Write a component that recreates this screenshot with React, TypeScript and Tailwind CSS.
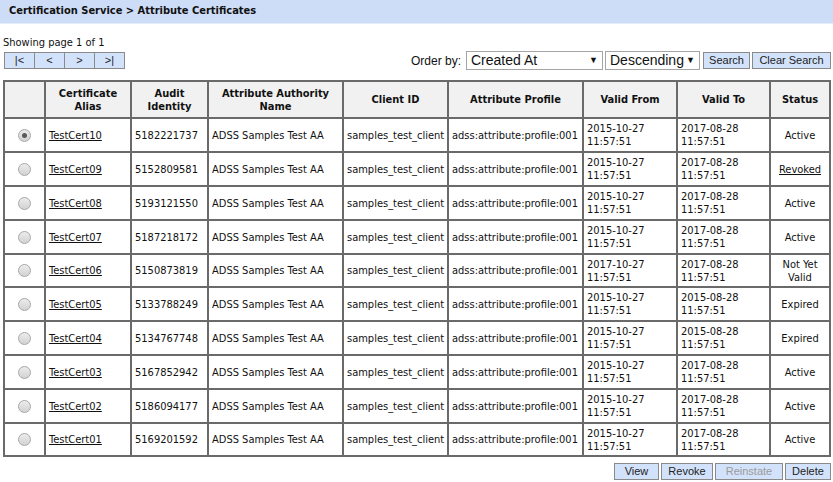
import { FC } from 'react';

type Cert = {
    alias: string;
    audit: string;
    from: string;
    to: string;
    status: string;
};

const certs: Cert[] = [
    { alias: 'TestCert10', audit: '5182221737', from: '2015-10-27', to: '2017-08-28', status: 'Active' },
    { alias: 'TestCert09', audit: '5152809581', from: '2015-10-27', to: '2017-08-28', status: 'Revoked' },
    { alias: 'TestCert08', audit: '5193121550', from: '2015-10-27', to: '2017-08-28', status: 'Active' },
    { alias: 'TestCert07', audit: '5187218172', from: '2015-10-27', to: '2017-08-28', status: 'Active' },
    { alias: 'TestCert06', audit: '5150873819', from: '2017-10-27', to: '2017-08-28', status: 'Not Yet Valid' },
    { alias: 'TestCert05', audit: '5133788249', from: '2015-10-27', to: '2015-08-28', status: 'Expired' },
    { alias: 'TestCert04', audit: '5134767748', from: '2015-10-27', to: '2015-08-28', status: 'Expired' },
    { alias: 'TestCert03', audit: '5167852942', from: '2015-10-27', to: '2017-08-28', status: 'Active' },
    { alias: 'TestCert02', audit: '5186094177', from: '2015-10-27', to: '2017-08-28', status: 'Active' },
    { alias: 'TestCert01', audit: '5169201592', from: '2015-10-27', to: '2017-08-28', status: 'Active' },
];

const btn = 'h-[17px] border border-[#8a8a8a] bg-[#d3e2fb] text-[11px] leading-none font-["Liberation_Sans",Arial,sans-serif]';
const th = 'border-2 border-[#6a6a6a] bg-[#f1f1f1] font-bold text-center align-middle leading-[13px] px-1';
const td = 'border-2 border-[#6a6a6a] align-middle px-[3px] leading-[13px]';

const Radio: FC<{ checked?: boolean }> = ({ checked }) => (
    <span className="inline-flex w-[13px] h-[13px] rounded-full border border-[#a9a9a9] bg-gradient-to-b from-[#ececec] to-[#d2d2d2] items-center justify-center align-middle">
        {checked && <span className="w-[5px] h-[5px] rounded-full bg-[#5a5a5a]" />}
    </span>
);

const Select: FC<{ label: string; width: string }> = ({ label, width }) => (
    <div className={`${width} h-[19px] border border-[#a5a5a5] bg-white flex items-center justify-between pl-[4px] pr-[4px] font-["Liberation_Sans",Arial,sans-serif] text-[14px] text-[#111]`}>
        <span>{label}</span>
        <span className="text-[9px]">▼</span>
    </div>
);

export default function App() {
    return (
        <div className="w-[833px] h-[482px] bg-white overflow-hidden text-[11px] text-[#111] font-['DejaVu_Sans_Condensed','DejaVu_Sans',Verdana,sans-serif]">
            {/* Title */}
            <div className="h-[24px] bg-[#cddcf7] flex items-center pl-[9px] text-[11px] font-bold text-[#111] border-b border-[#e4ecfb]">
                Certification Service &gt; Attribute Certificates
            </div>

            {/* Pager + order */}
            <div className="pl-[3px] pt-[12px] leading-[13px]">Showing page 1 of 1</div>
            <div className="flex items-center justify-between h-[19px] mt-[2px] pl-[4px] pr-[2px]">
                <div className="flex">
                    {['|<', '<', '>', '>|'].map((p) => (
                        <button key={p} className={`${btn} w-[31px] -ml-px first:ml-0 text-[10px] text-[#222]`}>{p}</button>
                    ))}
                </div>
                <div className="flex items-center gap-[2px]">
                    <span className="mr-[3px] font-['Liberation_Sans',Arial,sans-serif] text-[12px]">Order by:</span>
                    <Select label="Created At" width="w-[137px]" />
                    <Select label="Descending" width="w-[95px]" />
                    <button className={`${btn} w-[47px] ml-[1px] text-[#222]`}>Search</button>
                    <button className={`${btn} w-[79px] text-[#222]`}>Clear Search</button>
                </div>
            </div>

            {/* Table */}
            <table className="ml-[3px] mt-[10px] w-[828px] table-fixed border-collapse">
                <thead>
                    <tr className="h-[37px]">
                        <th className={`${th} w-[41px]`}></th>
                        <th className={`${th} w-[86px]`}>Certificate Alias</th>
                        <th className={`${th} w-[77px]`}>Audit Identity</th>
                        <th className={`${th} w-[135px]`}>Attribute Authority Name</th>
                        <th className={`${th} w-[105px]`}>Client ID</th>
                        <th className={`${th} w-[135px]`}>Attribute Profile</th>
                        <th className={`${th} w-[94px]`}>Valid From</th>
                        <th className={`${th} w-[93px]`}>Valid To</th>
                        <th className={`${th}`}>Status</th>
                    </tr>
                </thead>
                <tbody>
                    {certs.map((c, i) => (
                        <tr key={c.alias} className={i % 5 === 4 ? 'h-[33px]' : 'h-[34px]'}>
                            <td className={`${td} text-center`}><Radio checked={i === 0} /></td>
                            <td className={td}><span className="underline">{c.alias}</span></td>
                            <td className={td}>{c.audit}</td>
                            <td className={`${td} whitespace-nowrap`}>ADSS Samples Test AA</td>
                            <td className={`${td} whitespace-nowrap`}>samples_test_client</td>
                            <td className={`${td} whitespace-nowrap`}>adss:attribute:profile:001</td>
                            <td className={td}>{c.from}<br />11:57:51</td>
                            <td className={td}>{c.to}<br />11:57:51</td>
                            <td className={`${td} text-center`}>
                                {c.status === 'Revoked' ? <span className="underline">{c.status}</span> : c.status}
                            </td>
                        </tr>
                    ))}
                </tbody>
            </table>

            {/* Actions */}
            <div className="flex justify-end pr-[2px] mt-[6px]">
                <button className={`${btn} w-[45px] text-[#222]`}>View</button>
                <button className={`${btn} w-[52px] ml-[2px] text-[#222]`}>Revoke</button>
                <button className={`${btn} w-[68px] ml-[2px] text-[#9a9a9a]`}>Reinstate</button>
                <button className={`${btn} w-[46px] ml-[2px] text-[#222]`}>Delete</button>
            </div>
        </div>
    );
}
